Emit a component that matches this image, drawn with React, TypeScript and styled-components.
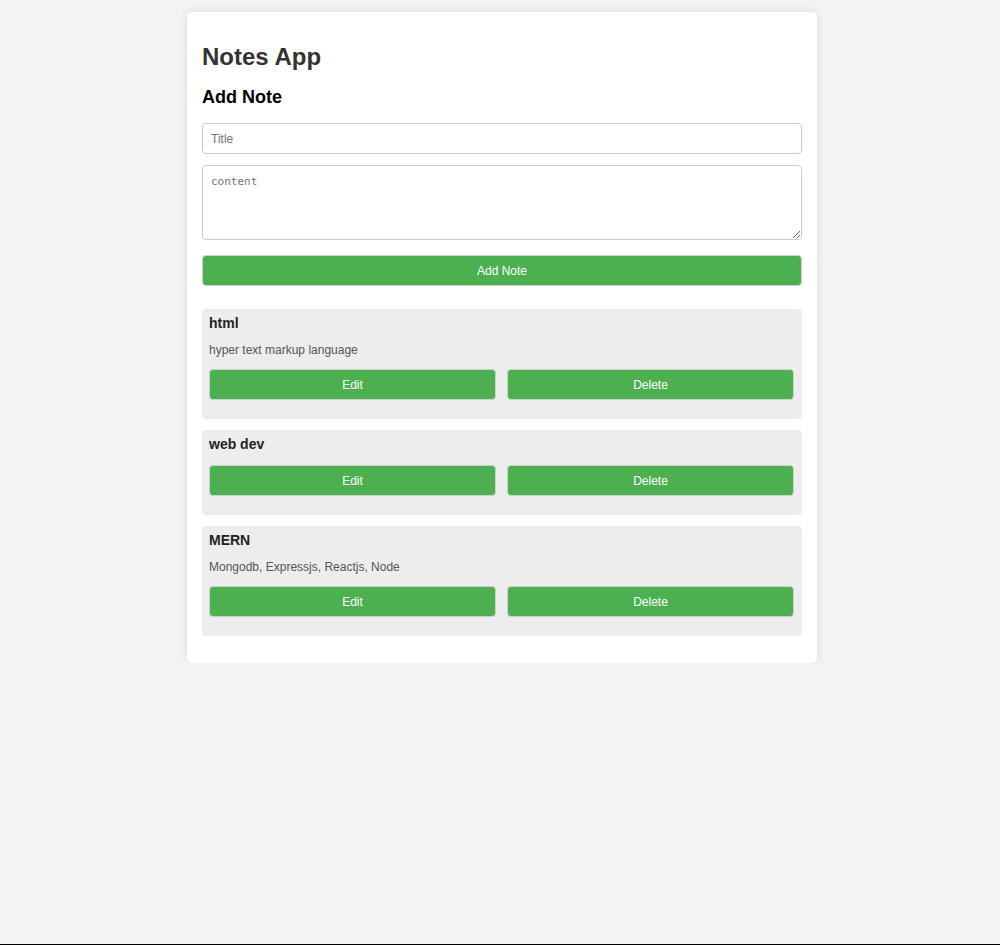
import React from "react";
import styled, { createGlobalStyle } from "styled-components";

const GlobalStyle = createGlobalStyle`
  html {
    height: 100vh;
    box-sizing: border-box;
    border-bottom: 1px solid #000;
    background: #f3f3f3;
  }
  body {
    margin: 0;
    padding-left: 4px;
    font-family: "Liberation Sans", Arial, sans-serif;
    background: #f3f3f3;
  }
`;

const Container = styled.div`
  width: 600px;
  margin: 12px auto 0;
  padding: 15px 15px 27px;
  background: #fff;
  border-radius: 5px;
  box-shadow: 0 0 10px rgba(0, 0, 0, 0.1);
`;

const Heading = styled.h1`
  margin: 16px 0 16px;
  font-size: 24px;
  font-weight: bold;
  color: #333;
  line-height: normal;
`;

const SubHeading = styled.h2`
  margin: 0 0 15px;
  font-size: 18px;
  font-weight: bold;
  color: #000;
  line-height: normal;
`;

const Form = styled.div`
  display: flex;
  flex-direction: column;
`;

const TitleInput = styled.input`
  box-sizing: border-box;
  width: 100%;
  height: 31px;
  margin: 0 0 11px;
  padding: 0 8px;
  border: 1px solid #ccc;
  border-radius: 4px;
  font-family: "Liberation Sans", Arial, sans-serif;
  font-size: 12px;
  &::placeholder {
    color: #757575;
  }
`;

const ContentArea = styled.textarea`
  box-sizing: border-box;
  width: 100%;
  height: 75px;
  margin: 0 0 15px;
  padding: 9px 8px 8px;
  border: 1px solid #ccc;
  border-radius: 4px;
  font-family: "DejaVu Sans Mono", monospace;
  font-size: 11px;
  &::placeholder {
    color: #757575;
  }
`;

const GreenButton = styled.button`
  box-sizing: border-box;
  height: 31px;
  width: 100%;
  padding: 0;
  background: #4caf50;
  color: #fff;
  border: 1px solid #cfcfcf;
  border-radius: 4px;
  font-family: "Liberation Sans", Arial, sans-serif;
  font-size: 12px;
  cursor: pointer;
`;

const NoteList = styled.div`
  display: flex;
  flex-direction: column;
  gap: 11px;
  margin-top: 23px;
`;

const Card = styled.div`
  background: #ededed;
  border-radius: 4px;
  padding: 7px 8px 19px 7px;
`;

const NoteTitle = styled.h3`
  margin: 0;
  font-size: 14px;
  line-height: 15px;
  font-weight: bold;
  color: #222;
`;

const NoteText = styled.p`
  margin: 13px 0 0;
  font-size: 12px;
  line-height: 12px;
  color: #555;
`;

const Actions = styled.div`
  display: grid;
  grid-template-columns: 1fr 1fr;
  gap: 11px;
  margin-top: 13px;
`;

const notes = [
  { title: "html", content: "hyper text markup language" },
  { title: "web dev", content: "" },
  { title: "MERN", content: "Mongodb, Expressjs, Reactjs, Node" },
];

export default function App() {
  return (
    <>
      <GlobalStyle />
      <Container>
        <Heading>Notes App</Heading>
        <SubHeading>Add Note</SubHeading>
        <Form>
          <TitleInput placeholder="Title" />
          <ContentArea placeholder="content" />
          <GreenButton>Add Note</GreenButton>
        </Form>
        <NoteList>
          {notes.map((n) => (
            <Card key={n.title}>
              <NoteTitle>{n.title}</NoteTitle>
              {n.content && <NoteText>{n.content}</NoteText>}
              <Actions>
                <GreenButton>Edit</GreenButton>
                <GreenButton>Delete</GreenButton>
              </Actions>
            </Card>
          ))}
        </NoteList>
      </Container>
    </>
  );
}
